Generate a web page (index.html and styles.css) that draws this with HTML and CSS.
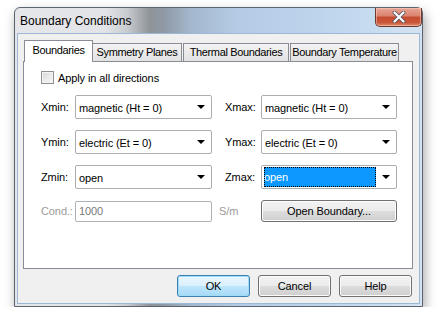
FILE: index.html
```html
<!DOCTYPE html>
<html>
<head>
<meta charset="utf-8">
<link rel="stylesheet" href="styles.css">
</head>
<body>
<div class="window">
  <div class="titlebar">
    <span class="title">Boundary Conditions</span>
    <div class="close">
      <svg width="14" height="12" viewBox="0 0 14 12"><path d="M2.5 1.5 L11.5 10.5 M11.5 1.5 L2.5 10.5" stroke="#4a5160" stroke-width="3.8" stroke-linecap="round"/><path d="M2.5 1.5 L11.5 10.5 M11.5 1.5 L2.5 10.5" stroke="#ffffff" stroke-width="2.2" stroke-linecap="round"/></svg>
    </div>
  </div>
  <div class="client">
    <div class="tabs">
      <div class="tab active">Boundaries</div>
      <div class="tab t2">Symmetry Planes</div>
      <div class="tab t3">Thermal Boundaries</div>
      <div class="tab t4">Boundary Temperature</div>
    </div>
    <div class="panel">
      <label class="check"><span class="box"></span>Apply in all directions</label>
      <div class="grid">
        <span class="lbl">Xmin:</span>
        <div class="combo"><span class="val">magnetic (Ht = 0)</span><span class="arrow"></span></div>
        <span class="lbl r">Xmax:</span>
        <div class="combo c2"><span class="val">magnetic (Ht = 0)</span><span class="arrow"></span></div>

        <span class="lbl">Ymin:</span>
        <div class="combo"><span class="val">electric (Et = 0)</span><span class="arrow"></span></div>
        <span class="lbl r">Ymax:</span>
        <div class="combo c2"><span class="val">electric (Et = 0)</span><span class="arrow"></span></div>

        <span class="lbl">Zmin:</span>
        <div class="combo"><span class="val">open</span><span class="arrow"></span></div>
        <span class="lbl r">Zmax:</span>
        <div class="combo c2"><span class="val sel">open</span><span class="arrow"></span></div>

        <span class="lbl dis">Cond.:</span>
        <div class="edit">1000</div>
        <span class="lbl dis unit">S/m</span>
        <div class="btn wide">Open Boundary...</div>
      </div>
    </div>
    <div class="buttons">
      <div class="btn def">OK</div>
      <div class="btn">Cancel</div>
      <div class="btn">Help</div>
    </div>
  </div>
</div>
</body>
</html>
```
FILE: styles.css
```css
* { box-sizing: border-box; }
html, body { margin: 0; padding: 0; background: #ffffff; }
body { font-family: "Liberation Sans", Arial, sans-serif; font-size: 11px; letter-spacing: -0.1px; color: #000; }

.window {
  margin: 7px 0 0 14px;
  width: 409px;
  height: 300px;
  border: 1px solid #5b6470;
  border-radius: 6px 6px 0 0;
  padding: 0 2px 2px 2px;
  background: linear-gradient(90deg, #e4e6e9 0px, #e2e4e7 90px, #c9ccd0 112px, #8e9398 135px, #8f9aa6 150px, #a3b7cc 175px, #b3cbe4 220px, #bcd4ec 300px, #c8dcf0 360px, #d4e3f2 409px);
  box-shadow: 2px 5px 12px rgba(0,0,0,0.35);
  display: flex;
  flex-direction: column;
}
.titlebar {
  height: 25px;
  flex: none;
  display: flex;
  align-items: flex-start;
  justify-content: space-between;
}
.title {
  font-size: 12px;
  letter-spacing: 0;
  color: #000;
  padding: 6px 0 0 3px;
}
.close {
  width: 47px;
  height: 19px;
  margin-right: -2px;
  border: 1px solid #6a3a30;
  border-top: none;
  border-radius: 0 0 5px 5px;
  background: linear-gradient(#e8a695 0%, #d9826d 45%, #c54b2f 50%, #c9573a 80%, #dd8d66 100%);
  box-shadow: inset 0 0 0 1px rgba(255,210,200,0.5);
  display: flex;
  align-items: center;
  justify-content: center;
}
.client {
  flex: 1;
  background: #f0f0f0;
  border: 1px solid #9bb8d6;
  padding: 6px 6px 0 5px;
  display: flex;
  flex-direction: column;
}
.tabs {
  display: flex;
  align-items: flex-end;
  height: 21px;
  flex: none;
  padding-left: 1px;
  position: relative;
  z-index: 1;
}
.tab {
  height: 18px;
  line-height: 16px;
  border: 1px solid #898c95;
  border-bottom: none;
  background: linear-gradient(#f3f3f3, #e2e2e2);
  text-align: center;
  white-space: nowrap;
  letter-spacing: -0.35px;
}
.tab.active {
  width: 69px;
  height: 22px;
  line-height: 19px;
  background: #ffffff;
  margin-right: -1px;
  position: relative;
  z-index: 2;
  margin-bottom: -1px;
}
.t2 { width: 90px; }
.t3 { width: 106px; margin-left: 1px; }
.t4 { width: 109px; margin-left: 1px; }
.panel {
  height: 208px;
  flex: none;
  background: #ffffff;
  border: 1px solid #898c95;
  padding: 9px 0 0 17px;
}
.check {
  display: flex;
  align-items: center;
  height: 13px;
  gap: 4px;
}
.box {
  width: 13px;
  height: 13px;
  border: 1px solid #8e8f8f;
  background: linear-gradient(135deg, #d8d8d8, #f8f8f8);
  box-shadow: inset 0 0 0 1px #f4f4f4;
}
.grid {
  margin-top: 11px;
  display: grid;
  grid-template-columns: 34px 137px 13px 36px 136px;
  grid-template-rows: 24px 24px 24px 22px;
  row-gap: 11px;
  align-items: center;
}
.grid .r { grid-column: 4; }
.lbl.dis { color: #9a9a9a; }
.combo {
  height: 24px;
  border: 1px solid #abadb3;
  border-radius: 2px;
  background: #fff;
  display: flex;
  align-items: center;
  justify-content: space-between;
  padding: 0 3px 0 2px;
}
.combo.c2 { grid-column: 5; }
.val { padding: 1px 1px 0 1px; }
.val.sel {
  flex: 1;
  height: 20px;
  line-height: 20px;
  background: #0c98ff;
  color: #fff;
  outline: 1px dotted #000;
  outline-offset: -1px;
  margin-right: 6px;
  padding: 0;
}
.arrow {
  width: 0; height: 0;
  border-left: 4px solid transparent;
  border-right: 4px solid transparent;
  border-top: 4px solid #000;
  margin-right: 3px;
}
.edit {
  height: 21px;
  border: 1px solid #adb2b5;
  border-radius: 2px;
  background: #fff;
  display: flex;
  align-items: center;
  padding-left: 3px;
  color: #7a7a7a;
}
.unit { grid-column: 3 / 5; padding-left: 7px; }
.btn {
  height: 22px;
  border: 1px solid #707070;
  border-radius: 3px;
  background: linear-gradient(#f2f2f2 0%, #ebebeb 50%, #dddddd 51%, #cfcfcf 100%);
  box-shadow: inset 0 0 0 1px #fcfcfc;
  display: flex;
  align-items: center;
  justify-content: center;
}
.btn.wide { grid-column: 5; }
.buttons {
  display: flex;
  justify-content: flex-end;
  gap: 8px;
  margin-top: 6px;
  padding-right: 1px;
}
.buttons .btn { width: 73px; }
.btn.def {
  border-color: #3c7fb1;
  background: linear-gradient(#eaf6fd 0%, #d9f0fc 50%, #bee6fd 51%, #a7d9f5 100%);
  box-shadow: inset 0 0 0 1px #a0dcf8;
}
```
